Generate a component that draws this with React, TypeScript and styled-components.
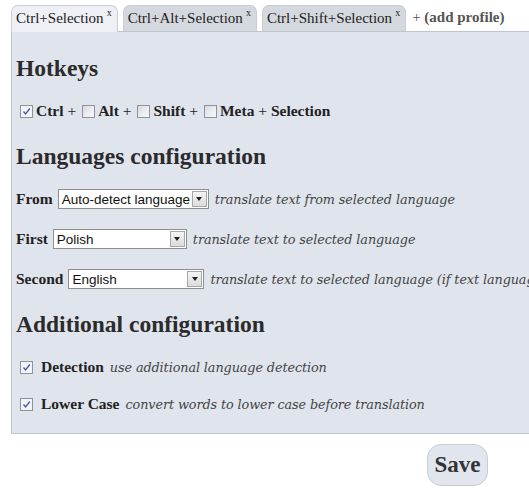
import React from "react";
import styled, { createGlobalStyle } from "styled-components";

const GlobalStyle = createGlobalStyle`
  html, body {
    margin: 0;
    padding: 0;
    background: #ffffff;
  }
`;

const Page = styled.div`
  width: 529px;
  height: 495px;
  overflow: hidden;
  padding: 5px 0 0 11px;
  box-sizing: border-box;
  font-family: "Liberation Serif", "Times New Roman", serif;
  color: #222;
`;

const TabBar = styled.div`
  display: flex;
  align-items: flex-end;
  gap: 5px;
  height: 26px;
`;

const Tab = styled.div<{ $active?: boolean }>`
  box-sizing: border-box;
  padding: 4px 5px 0 4px;
  border: 1px solid ${(p) => (p.$active ? "#c9ced8" : "#c8ccd3")};
  border-bottom: none;
  border-radius: 7px 7px 0 0;
  background: ${(p) => (p.$active ? "#eef0f5" : "#d5d8de")};
  font-size: 15px;
  color: #222;
  white-space: nowrap;
  margin-bottom: ${(p) => (p.$active ? "-1px" : "0")};
  height: ${(p) => (p.$active ? "27px" : "26px")};
  position: relative;
  z-index: ${(p) => (p.$active ? 1 : 0)};
`;

const Close = styled.sup`
  font-size: 10px;
  margin-left: 3px;
  vertical-align: 7px;
  line-height: 0;
`;

const AddTab = styled.div`
  padding: 4px 0 0 1px;
  font-size: 15px;
  color: #555;
  white-space: nowrap;
  align-self: stretch;
`;

const Panel = styled.div`
  width: 540px;
  height: 403px;
  box-sizing: border-box;
  background: #e0e4ed;
  border: 1px solid #bcc6d3;
  padding: 10px 0 0 4px;
  display: flex;
  flex-direction: column;
`;

const Heading = styled.h2<{ $top: number }>`
  margin: ${(p) => p.$top}px 0 0;
  font-family: "Liberation Serif", "Times New Roman", serif;
  font-size: 23.5px;
  font-weight: bold;
  color: #2b2b2b;
  line-height: 30px;
`;

const HotkeyRow = styled.div`
  display: flex;
  align-items: center;
  margin-top: 18px;
  padding-left: 4px;
  height: 20px;
  font-size: 15.5px;
  white-space: nowrap;
`;

const Key = styled.label`
  display: inline-flex;
  align-items: center;
  margin-right: 6px;
  white-space: pre;
`;

const KeyName = styled.b`
  margin-left: 3px;
`;

const Box = styled.span<{ $checked?: boolean }>`
  width: 11px;
  height: 11px;
  border: 1px solid #8d939c;
  background: ${(p) =>
    p.$checked
      ? "#f4f4f6"
      : "linear-gradient(135deg, #d8d9dc 0%, #eeeff1 60%, #f6f6f7 100%)"};
  display: inline-flex;
  align-items: center;
  justify-content: center;
  flex-shrink: 0;

  svg {
    width: 9px;
    height: 9px;
  }
`;

const Row = styled.div<{ $top: number; $indent?: number }>`
  display: flex;
  align-items: center;
  gap: 5px;
  height: 22px;
  margin-top: ${(p) => p.$top}px;
  padding-left: ${(p) => p.$indent ?? 0}px;
  white-space: nowrap;
  font-size: 15.5px;
`;

const Label = styled.b<{ $gap?: number }>`
  margin-left: ${(p) => p.$gap ?? 0}px;
  flex-shrink: 0;
`;

const SelectBox = styled.div<{ $width: number }>`
  width: ${(p) => p.$width}px;
  flex-shrink: 0;
  height: 20px;
  box-sizing: border-box;
  border: 1px solid #8e8f8f;
  background: #fff;
  display: flex;
  align-items: center;
  padding: 0 1px 0 3px;
  font-family: "Liberation Sans", Arial, sans-serif;
  font-size: 13.5px;
  color: #111;
`;

const SelectText = styled.span`
  flex: 1;
`;

const Arrow = styled.span`
  width: 15px;
  height: 16px;
  box-sizing: border-box;
  border: 1px solid #a5a7aa;
  background: linear-gradient(#f4f4f4, #dcdcdc);
  display: flex;
  align-items: center;
  justify-content: center;

  &::after {
    content: "";
    border-left: 3.5px solid transparent;
    border-right: 3.5px solid transparent;
    border-top: 4px solid #222;
  }
`;

const Hint = styled.i`
  font-family: "DejaVu Serif", serif;
  font-style: italic;
  font-size: 12.8px;
  color: #444;
  letter-spacing: -0.1px;
  margin-left: 1px;
`;

const Footer = styled.div`
  display: flex;
  padding: 10px 0 0 416px;
`;

const SaveButton = styled.button`
  width: 61px;
  height: 42px;
  border-radius: 14px;
  border: 1px solid #c9ccd3;
  background: #e1e5ee;
  font-family: "Liberation Serif", "Times New Roman", serif;
  font-weight: bold;
  font-size: 23px;
  color: #333;
  padding: 0;
`;

const Check = () => (
  <svg viewBox="0 0 9 9">
    <path d="M1.5 4.5 L3.6 7 L7.8 1.5" fill="none" stroke="#4a5db0" strokeWidth="1.4" />
  </svg>
);

const CheckBox = ({ checked }: { checked?: boolean }) => (
  <Box $checked={checked}>{checked && <Check />}</Box>
);

const Select = ({ value, width }: { value: string; width: number }) => (
  <SelectBox $width={width}>
    <SelectText>{value}</SelectText>
    <Arrow />
  </SelectBox>
);

export default function App() {
  return (
    <>
      <GlobalStyle />
      <Page>
        <TabBar>
          <Tab $active>
            Ctrl+Selection<Close>x</Close>
          </Tab>
          <Tab>
            Ctrl+Alt+Selection<Close>x</Close>
          </Tab>
          <Tab>
            Ctrl+Shift+Selection<Close>x</Close>
          </Tab>
          <AddTab>
            + <b>(add profile)</b>
          </AddTab>
        </TabBar>
        <Panel>
          <Heading $top={11}>Hotkeys</Heading>
          <HotkeyRow>
            <Key>
              <CheckBox checked />
              <KeyName>Ctrl</KeyName> +
            </Key>
            <Key>
              <CheckBox />
              <KeyName>Alt</KeyName> +
            </Key>
            <Key>
              <CheckBox />
              <KeyName>Shift</KeyName> +
            </Key>
            <Key>
              <CheckBox />
              <KeyName>Meta</KeyName> + <b>Selection</b>
            </Key>
          </HotkeyRow>
          <Heading $top={20}>Languages configuration</Heading>
          <Row $top={17}>
            <Label>From</Label>
            <Select value="Auto-detect language" width={151} />
            <Hint>translate text from selected language</Hint>
          </Row>
          <Row $top={18}>
            <Label>First</Label>
            <Select value="Polish" width={134} />
            <Hint>translate text to selected language</Hint>
          </Row>
          <Row $top={18}>
            <Label>Second</Label>
            <Select value="English" width={136} />
            <Hint>translate text to selected language (if text language is the same as the first one)</Hint>
          </Row>
          <Heading $top={19}>Additional configuration</Heading>
          <Row $top={17} $indent={4}>
            <CheckBox checked />
            <Label $gap={3}>Detection</Label>
            <Hint>use additional language detection</Hint>
          </Row>
          <Row $top={15} $indent={4}>
            <CheckBox checked />
            <Label $gap={3}>Lower Case</Label>
            <Hint>convert words to lower case before translation</Hint>
          </Row>
        </Panel>
        <Footer>
          <SaveButton>Save</SaveButton>
        </Footer>
      </Page>
    </>
  );
}
